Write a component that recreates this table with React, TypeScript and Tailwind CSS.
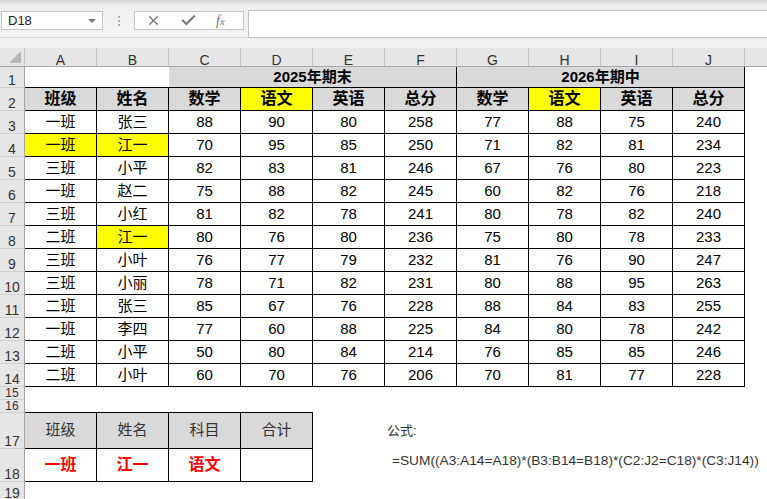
import { X, Check } from "lucide-react"

const COLS = ["A", "B", "C", "D", "E", "F", "G", "H", "I", "J"]

const HEAD = ["班级", "姓名", "数学", "语文", "英语", "总分", "数学", "语文", "英语", "总分"]

// [班级, 姓名, scores...], plus which columns are yellow
const DATA: { v: (string | number)[]; y?: number[] }[] = [
  { v: ["一班", "张三", 88, 90, 80, 258, 77, 88, 75, 240] },
  { v: ["一班", "江一", 70, 95, 85, 250, 71, 82, 81, 234], y: [0, 1] },
  { v: ["三班", "小平", 82, 83, 81, 246, 67, 76, 80, 223] },
  { v: ["一班", "赵二", 75, 88, 82, 245, 60, 82, 76, 218] },
  { v: ["三班", "小红", 81, 82, 78, 241, 80, 78, 82, 240] },
  { v: ["二班", "江一", 80, 76, 80, 236, 75, 80, 78, 233], y: [1] },
  { v: ["三班", "小叶", 76, 77, 79, 232, 81, 76, 90, 247] },
  { v: ["三班", "小丽", 78, 71, 82, 231, 80, 88, 95, 263] },
  { v: ["二班", "张三", 85, 67, 76, 228, 88, 84, 83, 255] },
  { v: ["一班", "李四", 77, 60, 88, 225, 84, 80, 78, 242] },
  { v: ["二班", "小平", 50, 80, 84, 214, 76, 85, 85, 246] },
  { v: ["二班", "小叶", 60, 70, 76, 206, 70, 81, 77, 228] },
]

function RowHead({ n, h, small }: { n: number; h: string; small?: boolean }) {
  return (
    <div
      className={`${h} w-[25px] shrink-0 overflow-hidden flex items-end justify-center bg-[#e6e6e6] border-r border-r-[#a6a6a6] border-b border-b-[#cfcfcf] ${small ? "text-[12px] leading-[12px]" : "text-[14px] leading-[14px]"} text-[#333]`}
    >
      {n}
    </div>
  )
}

function Cell({
  w = "w-[72px]",
  bg = "",
  r,
  b,
  className = "",
  children,
}: {
  w?: string
  bg?: string
  r?: boolean
  b?: boolean
  className?: string
  children?: React.ReactNode
}) {
  return (
    <div
      className={`${w} ${bg} h-full shrink-0 flex items-center justify-center whitespace-nowrap ${r ? "border-r border-r-black" : ""} ${b ? "border-b border-b-black" : ""} ${className}`}
    >
      {children}
    </div>
  )
}

function Toolbar() {
  return (
    <div className="h-[38px] flex items-start pt-[11px] bg-[linear-gradient(#d8d8d8,#efefef_6px,#f3f3f3)] border-b border-b-[#dadada]">
      <div className="ml-[1px] w-[102px] h-[19px] bg-white border border-[#c6c6c6] flex items-center justify-between pl-[6px] pr-[6px]">
        <span className="text-[13px] text-[#222]">D18</span>
        <span className="w-0 h-0 border-l-[4px] border-r-[4px] border-t-[4px] border-l-transparent border-r-transparent border-t-[#7a7a7a]" />
      </div>
      <div className="w-[31px] h-[19px] flex flex-col items-center justify-center gap-[2px]">
        <span className="w-[2px] h-[2px] bg-[#b0b0b0]" />
        <span className="w-[2px] h-[2px] bg-[#b0b0b0]" />
        <span className="w-[2px] h-[2px] bg-[#b0b0b0]" />
      </div>
      <div className="w-[110px] h-[19px] bg-white border border-[#c6c6c6] flex items-center">
        <X className="ml-[11px] text-[#7a7a7a]" size={15} strokeWidth={2.4} />
        <Check className="ml-[19px] text-[#7a7a7a]" size={17} strokeWidth={3.2} />
        <span className="ml-[19px] font-['Liberation_Serif',serif] italic text-[14px] text-[#777] leading-none">
          f<span className="text-[11px]">x</span>
        </span>
      </div>
      <div className="ml-[4px] flex-1 h-[28px] -mt-[1px] bg-white border border-[#c6c6c6] border-r-0" />
    </div>
  )
}

export default function App() {
  return (
    <div className="w-[767px] h-[499px] overflow-hidden bg-white font-['Liberation_Sans','Noto_Sans_CJK_SC',sans-serif] text-black">
      <Toolbar />
      <div className="h-[10px] bg-[#f0f0f0]" />

      {/* column headers */}
      <div className="flex h-[19px] bg-[#e6e6e6] border-b border-b-[#a6a6a6]">
        <div className="w-[25px] shrink-0 relative border-r border-r-[#c6c6c6]">
          <svg className="absolute right-[3px] bottom-[3px]" width="12" height="12" viewBox="0 0 12 12">
            <polygon points="12,0 12,12 0,12" fill="#b7b7b7" />
          </svg>
        </div>
        {COLS.map((c) => (
          <div
            key={c}
            className="w-[72px] shrink-0 flex items-end justify-center border-r border-r-[#c6c6c6] text-[14px] leading-[12px] text-[#333]"
          >
            {c}
          </div>
        ))}
        <div className="flex-1" />
      </div>

      {/* row 1 */}
      <div className="flex h-[21px]">
        <RowHead n={1} h="h-[21px]" />
        <Cell w="w-[144px]" b />
        <Cell w="w-[288px]" bg="bg-[#d9d9d9]" r b className="text-[15px] font-bold">
          2025年期末
        </Cell>
        <Cell w="w-[288px]" bg="bg-[#d9d9d9]" r b className="text-[15px] font-bold">
          2026年期中
        </Cell>
      </div>

      {/* row 2 */}
      <div className="flex h-[23px]">
        <RowHead n={2} h="h-[23px]" />
        {HEAD.map((t, i) => (
          <Cell
            key={i}
            bg={i === 3 || i === 7 ? "bg-[#ffff00]" : "bg-[#d9d9d9]"}
            r
            b
            className="text-[16px] font-bold"
          >
            {t}
          </Cell>
        ))}
      </div>

      {/* rows 3-14 */}
      {DATA.map((row, ri) => (
        <div key={ri} className="flex h-[23px]">
          <RowHead n={ri + 3} h="h-[23px]" />
          {row.v.map((t, i) => (
            <Cell key={i} bg={row.y?.includes(i) ? "bg-[#ffff00]" : "bg-white"} r b className="text-[15px]">
              {t}
            </Cell>
          ))}
        </div>
      ))}

      {/* row 15 */}
      <div className="flex h-[13px]">
        <RowHead n={15} h="h-[13px]" small />
      </div>

      {/* row 16 */}
      <div className="flex h-[13px]">
        <RowHead n={16} h="h-[13px]" small />
        {[0, 1, 2, 3].map((i) => (
          <Cell key={i} b />
        ))}
      </div>

      {/* row 17 */}
      <div className="flex h-[36px]">
        <RowHead n={17} h="h-[36px]" />
        {["班级", "姓名", "科目", "合计"].map((t) => (
          <Cell key={t} bg="bg-[#d9d9d9]" r b className="text-[15px] text-[#333]">
            {t}
          </Cell>
        ))}
        <Cell />
        <div className="flex-1 h-full flex items-center pl-[2px] text-[13px] text-[#333]">公式:</div>
      </div>

      {/* row 18 */}
      <div className="flex h-[33px]">
        <RowHead n={18} h="h-[33px]" />
        {["一班", "江一", "语文", ""].map((t, i) => (
          <Cell key={i} r b className="text-[16px] font-bold text-[#ff0000]">
            {t}
          </Cell>
        ))}
        <Cell />
        <div className="flex-1 h-full flex items-center pb-[8px] pl-[7px] text-[13.7px] text-[#333] whitespace-nowrap">
          =SUM((A3:A14=A18)*(B3:B14=B18)*(C2:J2=C18)*(C3:J14))
        </div>
      </div>

      {/* row 19 */}
      <div className="flex h-[19px]">
        <RowHead n={19} h="h-[19px]" />
      </div>
    </div>
  )
}
